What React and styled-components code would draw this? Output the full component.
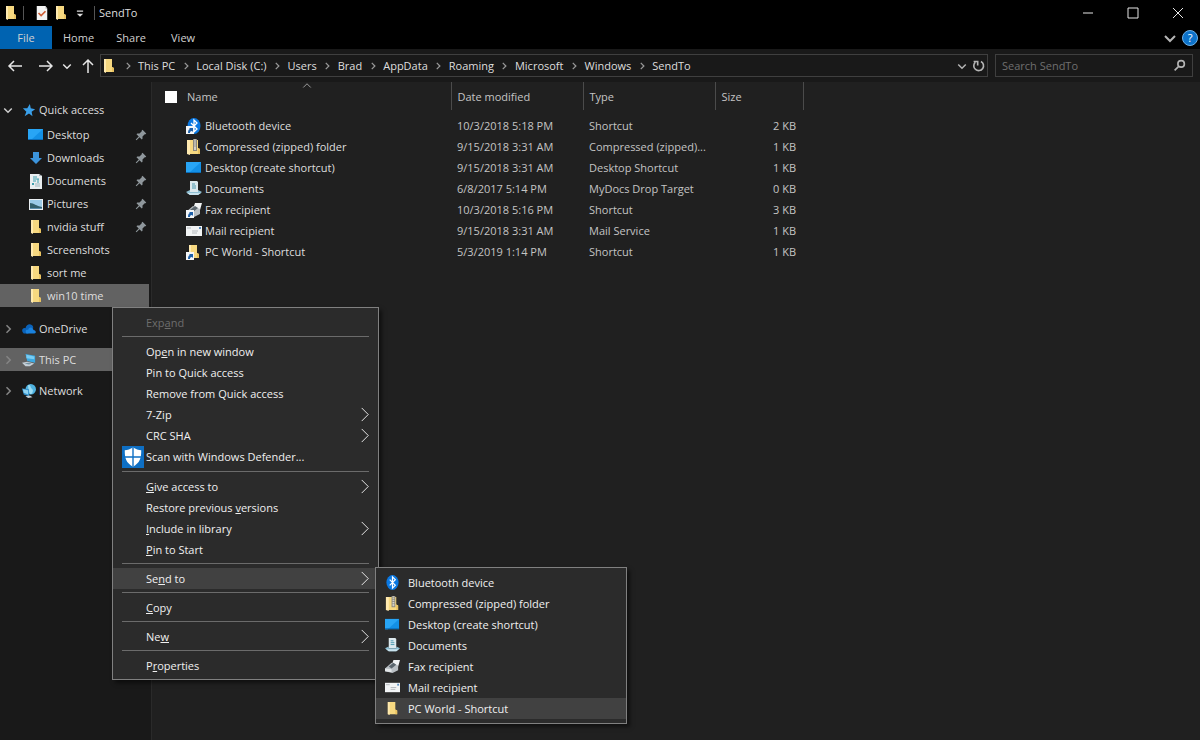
import React from "react";
import styled, { createGlobalStyle, css } from "styled-components";

const quickAccess = [
  { name: "Desktop", icon: "desktop", pinned: true },
  { name: "Downloads", icon: "download", pinned: true },
  { name: "Documents", icon: "document", pinned: true },
  { name: "Pictures", icon: "picture", pinned: true },
  { name: "nvidia stuff", icon: "folder", pinned: true },
  { name: "Screenshots", icon: "folder" },
  { name: "sort me", icon: "folder" },
  { name: "win10 time", icon: "folder", selected: true },
];

const roots = [
  { name: "OneDrive", icon: "cloud" },
  { name: "This PC", icon: "pc", selected: true },
  { name: "Network", icon: "network" },
];

const crumbs = [
  "This PC",
  "Local Disk (C:)",
  "Users",
  "Brad",
  "AppData",
  "Roaming",
  "Microsoft",
  "Windows",
  "SendTo",
];

const files = [
  { name: "Bluetooth device", icon: "bluetooth", link: true, date: "10/3/2018 5:18 PM", type: "Shortcut", size: "2 KB" },
  { name: "Compressed (zipped) folder", icon: "zip", date: "9/15/2018 3:31 AM", type: "Compressed (zipped)...", size: "1 KB" },
  { name: "Desktop (create shortcut)", icon: "desktop", date: "9/15/2018 3:31 AM", type: "Desktop Shortcut", size: "1 KB" },
  { name: "Documents", icon: "docs", date: "6/8/2017 5:14 PM", type: "MyDocs Drop Target", size: "0 KB" },
  { name: "Fax recipient", icon: "fax", link: true, date: "10/3/2018 5:16 PM", type: "Shortcut", size: "3 KB" },
  { name: "Mail recipient", icon: "mail", date: "9/15/2018 3:31 AM", type: "Mail Service", size: "1 KB" },
  { name: "PC World - Shortcut", icon: "folder", link: true, date: "5/3/2019 1:14 PM", type: "Shortcut", size: "1 KB" },
];

// "&" marks the access key of a label
const menuGroups = [
  [{ label: "Exp&and", disabled: true }],
  [
    { label: "Op&en in new window" },
    { label: "Pin to Quick access" },
    { label: "Remove from Quick access" },
    { label: "7-Zip", more: true },
    { label: "CRC SHA", more: true },
    { label: "Scan with Windows Defender...", icon: "shield" },
  ],
  [
    { label: "&Give access to", more: true },
    { label: "Restore previous &versions" },
    { label: "&Include in library", more: true },
    { label: "&Pin to Start" },
  ],
  [{ label: "Se&nd to", more: true, open: true }],
  [{ label: "&Copy" }],
  [{ label: "Ne&w", more: true }],
  [{ label: "P&roperties" }],
];

const drawings = {
  folder: (
    <>
      <path d="M3 1h8v8l2 1v4H3z" fill="#f6d880" />
      <path d="M3 1h2v14l-2-1z" fill="#ffeab0" />
      <path d="M11 9l2 1v4h-2z" fill="#e9c260" />
    </>
  ),
  zip: (
    <>
      <path d="M1 1h11v8l2 1v5H1z" fill="#f6d880" />
      <path d="M1 1h3v15l-3-1z" fill="#ffeab0" />
      <path d="M12 9l2 1v5h-2z" fill="#e9c260" />
      <path d="M7 0h4v12H7z" fill="#8a877c" />
      <path d="M8 1h2M8 3h2M8 5h2M8 7h2" stroke="#e6e4dc" />
      <path d="M8 8h2v3H8z" fill="#d0cec6" />
    </>
  ),
  desktop: (
    <>
      <path d="M0 2h15v11H0z" fill="#1390e6" />
      <path d="M0 2h15L3 13H0z" fill="#28a5f5" />
      <path d="M0 12h15v1H0z" fill="#0a6cb8" />
    </>
  ),
  download: <path d="M5 2h6v6h3l-6 6-6-6h3z" fill="#3c94dc" />,
  document: (
    <>
      <path d="M2 1h9l3 2v13H2z" fill="#e9eef0" />
      <path d="M11 1l3 2h-3z" fill="#a9b4b8" />
      <path d="M5 4h4M5 6h6M5 8h3M10 6v4" stroke="#3f9fae" strokeWidth="1" />
      <path d="M4 10h2v2H4z" fill="#3f9fae" />
      <path d="M7 11h5M7 13h5" stroke="#9fb7bf" />
    </>
  ),
  picture: (
    <>
      <path d="M1 3h14v11H1z" fill="#e9eef2" />
      <path d="M2 4h12v9H2z" fill="#9ccbe8" />
      <path d="M2 7c4 0 6 3 12 4v2H2z" fill="#34606c" />
      <path d="M2 12h12v1H2z" fill="#5c8fae" />
    </>
  ),
  cloud: (
    <>
      <path d="M1 12c-2-3 0-6 3-5 1-5 7-6 9-1l-6 7H2z" fill="#0b62b8" />
      <path d="M5 13c-2-3 0-5 2-4 1-4 6-3 6 0 3 0 4 4 1 4z" fill="#1a82de" />
    </>
  ),
  pc: (
    <>
      <path d="M4 1l11 2v8L6 9z" fill="#3ca9e2" />
      <path d="M5 2l9 2v3L5 6z" fill="#7accf2" />
      <path d="M0 11l6-1 8 2-5 3H4z" fill="#c3ced6" />
      <path d="M3 12l4-1 4 1-3 1z" fill="#74909f" />
    </>
  ),
  network: (
    <>
      <circle cx="10" cy="6" r="6" fill="#4fb2e0" />
      <path d="M7 1c4 0 2 3 4 4s2 4 0 6-4-4-4-10z" fill="#9bdcf4" />
      <path d="M0 5l8 1v8l-6-2z" fill="#3392cd" />
      <path d="M1 6l6 1v5L2 10z" fill="#8fd2f0" />
      <path d="M4 14l5-1 3 2-5 1z" fill="#c3ced6" />
    </>
  ),
  bluetooth: (
    <>
      <ellipse cx="8" cy="8" rx="6.5" ry="8" fill="#0a78e2" />
      <path d="M5 5l6 6-3 3V2l3 3-6 6" fill="none" stroke="#fff" strokeWidth="1.3" />
    </>
  ),
  docs: (
    <>
      <path d="M4 0h7l1 1v10H4z" fill="#dce9ee" />
      <path d="M6 3h3M6 5h4M6 7h4" stroke="#4a98ae" />
      <path d="M0 11l4-2v2h8V9l4 2-4 3H4z" fill="#8fc0d4" />
      <path d="M1 12h14l-3 2H4z" fill="#c9e3ee" />
    </>
  ),
  fax: (
    <>
      <path d="M9 1l7 0-2 7-7-1z" fill="#f1f3f4" />
      <path d="M0 10l7-6 7 3v5l-6 3-8-2z" fill="#b9bfc4" />
      <path d="M0 10l7 1v3l-7-1z" fill="#e2e6e8" />
      <path d="M4 8l5-4 3 2-5 4z" fill="#5b666e" />
    </>
  ),
  mail: (
    <>
      <path d="M0 3h16v10H0z" fill="#f2f4f5" />
      <path d="M13 4h2v2h-2z" fill="#5c8fc0" />
      <path d="M1 5h4M6 8h6M6 10h5" stroke="#b4b9bd" />
    </>
  ),
  star: <path d="M9 1l1 5 5 1-4 3 1 5-4-3-5 3 2-5-4-4h5z" fill="#3aa0ea" />,
  pin: <path d="M10 1l5 5-1 1h-1l-3 3v3l-1 1-3-3-4 4-1-1 4-4-3-3 1-1h3l3-3V2z" fill="#8f979c" />,
  properties: (
    <>
      <path d="M2 0h10l2 3v13H2z" fill="#f4f4f4" />
      <path d="M12 0l2 3h-2z" fill="#b5b5b5" />
      <path d="M4 8l3 3 5-5" fill="none" stroke="#cf5f37" strokeWidth="2" />
    </>
  ),
  shield: (
    <>
      <path d="M0 0h16v16H0z" fill="#0e6fc4" />
      <path d="M8 1c2 1 4 2 6 2 0 6-1 9-6 12C3 12 2 9 2 3c2 0 4-1 6-2z" fill="#fff" />
      <path d="M8 1v14M2 8h12" stroke="#0e6fc4" />
    </>
  ),
};

const strokes = {
  down: "M3 6l5 5 5-5",
  up: "M3 10l5-5 5 5",
  right: "M6 3l5 5-5 5",
  more: "M5 1l7 7-7 7",
  back: "M2 8h13M7 3L2 8l5 5",
  forward: "M2 8h13M10 3l5 5-5 5",
  upArrow: "M9 15V2M4 7l5-5 5 5",
  minimize: "M3 8h10",
  maximize: "M3 3h10v10H3z",
  close: "M3 3l10 10M13 3L3 13",
  refresh: "M11 3a6 6 0 1 1-7 1M2 3h5v5",
  search: "M7 9l-5 5M10 2a4 4 0 1 1 0 8 4 4 0 1 1 0-8z",
};

const Icon = ({ name, size = 16, link }) => (
  <Drawing viewBox="0 0 16 16" $size={size} aria-hidden="true">
    {drawings[name]}
    {link && (
      <>
        <path d="M0 8h8v8H0z" fill="#f4f6f8" />
        <path d="M2 15c0-3 1-4 2-4l-1-1h4v4l-1-1c-2 0-2 1-2 2z" fill="#1d5fa8" />
      </>
    )}
  </Drawing>
);

const Line = ({ name, size = 16, width = 1 }) => (
  <Drawing viewBox="0 0 16 16" $size={size} aria-hidden="true">
    <path d={strokes[name]} fill="none" stroke="currentColor" strokeWidth={width} />
  </Drawing>
);

const Label = ({ text }) => {
  const at = text.indexOf("&");
  if (at < 0) return <span>{text}</span>;
  return (
    <span>
      {text.slice(0, at)}
      <u>{text[at + 1]}</u>
      {text.slice(at + 2)}
    </span>
  );
};

const SendToMenu = () => (
  <SubMenu role="menu" aria-label="Send to">
    {files.map((file, i) => (
      <SubMenuItem key={file.name} role="menuitem" $active={i === files.length - 1}>
        <Icon name={file.icon} size={15} />
        <span>{file.name}</span>
      </SubMenuItem>
    ))}
  </SubMenu>
);

const FolderMenu = () => (
  <ContextMenu role="menu" aria-label="win10 time">
    {menuGroups.map((group, i) => (
      <MenuGroup key={i}>
        {group.map((item) => (
          <MenuEntry key={item.label}>
            <MenuItem role="menuitem" disabled={item.disabled} $active={item.open}>
              <MenuIcon>{item.icon && <Icon name={item.icon} size={22} />}</MenuIcon>
              <Label text={item.label} />
              {item.more && <Line name="more" size={15} />}
            </MenuItem>
            {item.open && <SendToMenu />}
          </MenuEntry>
        ))}
      </MenuGroup>
    ))}
  </ContextMenu>
);

const App = () => {
  return (
    <Window>
      <GlobalStyle />
      <TitleBar>
        <Icon name="folder" />
        <Divider />
        <QuickTools>
          <ToolButton aria-label="Properties">
            <Icon name="properties" size={14} />
          </ToolButton>
          <ToolButton aria-label="New folder">
            <Icon name="folder" />
          </ToolButton>
          <ToolButton aria-label="Customize Quick Access Toolbar">
            <Drawing viewBox="0 0 16 16" $size={10}>
              <path d="M3 5h10" stroke="#ddd" strokeWidth="2" />
              <path d="M3 9h10l-5 5z" fill="#ddd" />
            </Drawing>
          </ToolButton>
        </QuickTools>
        <Divider />
        <Title>SendTo</Title>
        <WindowButton aria-label="Minimize">
          <Line name="minimize" />
        </WindowButton>
        <WindowButton aria-label="Maximize">
          <Line name="maximize" />
        </WindowButton>
        <WindowButton aria-label="Close">
          <Line name="close" />
        </WindowButton>
      </TitleBar>

      <Ribbon>
        <Tab $file>File</Tab>
        <Tab>Home</Tab>
        <Tab>Share</Tab>
        <Tab>View</Tab>
        <RibbonEnd>
          <ToolButton aria-label="Expand the Ribbon">
            <Line name="down" width={2} />
          </ToolButton>
          <Help aria-label="Help">?</Help>
        </RibbonEnd>
      </Ribbon>

      <NavBar>
        <NavButtons>
          <NavButton aria-label="Back" $width={30}>
            <Line name="back" width={1.5} />
          </NavButton>
          <NavButton aria-label="Forward" $width={30}>
            <Line name="forward" width={1.5} />
          </NavButton>
          <NavButton aria-label="Recent locations" $width={14}>
            <Line name="down" size={12} width={2} />
          </NavButton>
          <NavButton aria-label="Up" $width={26}>
            <Line name="upArrow" width={1.5} />
          </NavButton>
        </NavButtons>
        <Address aria-label="Address">
          <Icon name="folder" />
          {crumbs.map((crumb) => (
            <React.Fragment key={crumb}>
              <CrumbArrow>
                <Line name="right" size={10} width={2} />
              </CrumbArrow>
              <Crumb href="#">{crumb}</Crumb>
            </React.Fragment>
          ))}
          <AddressEnd>
            <ToolButton aria-label="Previous locations">
              <Line name="down" size={12} width={2} />
            </ToolButton>
            <ToolButton aria-label="Refresh">
              <Line name="refresh" size={13} width={2} />
            </ToolButton>
          </AddressEnd>
        </Address>
        <Search>
          <input type="search" aria-label="Search SendTo" placeholder="Search SendTo" />
          <Line name="search" size={13} width={2} />
        </Search>
      </NavBar>

      <Body>
        <Sidebar aria-label="Folders">
          <TreeRow href="#">
            <Twisty $open>
              <Line name="down" size={12} width={2} />
            </Twisty>
            <Icon name="star" size={14} />
            <TreeLabel>Quick access</TreeLabel>
          </TreeRow>
          <TreeChildren>
            {quickAccess.map((item) => (
              <TreeRow key={item.name} href="#" $child $selected={item.selected}>
                <Icon name={item.icon} />
                <TreeLabel>{item.name}</TreeLabel>
                {item.pinned && <Icon name="pin" size={12} />}
              </TreeRow>
            ))}
          </TreeChildren>
          <Roots>
            {roots.map((item) => (
              <TreeRow key={item.name} href="#" $selected={item.selected}>
                <Twisty>
                  <Line name="right" size={12} width={2} />
                </Twisty>
                <Icon name={item.icon} size={14} />
                <TreeLabel>{item.name}</TreeLabel>
              </TreeRow>
            ))}
          </Roots>
        </Sidebar>

        <Content>
          <Files>
            <colgroup>
              <col width="299" />
              <col width="132" />
              <col width="132" />
              <col width="88" />
            </colgroup>
            <thead>
              <tr>
                <th>
                  <NameHead>
                    <SelectAll type="checkbox" aria-label="Select all" />
                    Name
                    <SortMark>
                      <Line name="up" size={12} />
                    </SortMark>
                  </NameHead>
                </th>
                <th>Date modified</th>
                <th>Type</th>
                <th>Size</th>
              </tr>
            </thead>
            <tbody>
              {files.map((file) => (
                <tr key={file.name}>
                  <td>
                    <FileName>
                      <Icon name={file.icon} link={file.link} />
                      {file.name}
                    </FileName>
                  </td>
                  <td>{file.date}</td>
                  <td>{file.type}</td>
                  <td>{file.size}</td>
                </tr>
              ))}
            </tbody>
          </Files>
        </Content>
      </Body>

      <FolderMenu />
    </Window>
  );
};

const GlobalStyle = createGlobalStyle`
  * {
    box-sizing: border-box;
  }

  body {
    margin: 0;
    background: #202020;
  }

  body, button, input {
    font-family: "Open Sans", "Noto Sans", sans-serif;
    font-size: 11px;
    line-height: 16px;
    color: #dedede;
  }

  button {
    padding: 0;
    border: 0;
    background: none;
  }

  a {
    color: inherit;
    text-decoration: none;
  }
`;

const Drawing = styled.svg`
  display: block;
  flex: none;
  width: ${(p) => p.$size}px;
  height: ${(p) => p.$size}px;
`;

const Window = styled.div`
  position: relative;
  display: flex;
  flex-direction: column;
  min-height: 100vh;
  background: #191919;
`;

const TitleBar = styled.header`
  display: flex;
  align-items: center;
  height: 26px;
  padding-left: 3px;
  background: #000;
`;

const Divider = styled.span`
  width: 1px;
  height: 14px;
  margin: 0 4px;
  background: #555;
`;

const QuickTools = styled.div`
  display: flex;
  gap: 3px;
  padding: 0 2px 0 6px;
`;

const ToolButton = styled.button`
  display: flex;
  align-items: center;
  justify-content: center;
  min-width: 16px;
  color: #b5b5b5;
`;

const Title = styled.span`
  flex: 1;
`;

const WindowButton = styled(ToolButton)`
  width: 45px;
  height: 24px;
  color: #e6e6e6;
`;

const Ribbon = styled.div`
  display: flex;
  height: 23px;
  background: #000;
`;

const Tab = styled.button`
  min-width: 52px;
  padding: 0 11px;
  color: #d0d0d0;
  background: ${(p) => (p.$file ? "#0063b1" : "none")};
`;

const RibbonEnd = styled.div`
  display: flex;
  align-items: center;
  gap: 4px;
  margin-left: auto;
  padding-right: 2px;
`;

const Help = styled.button`
  width: 16px;
  height: 16px;
  border: 1px solid #6cb2ea;
  border-radius: 50%;
  background: #0d72c9;
  color: #fff;
  line-height: 14px;
`;

const NavBar = styled.nav`
  display: flex;
  align-items: center;
  height: 33px;
  padding-right: 7px;
`;

const NavButtons = styled.div`
  display: flex;
  align-items: center;
  width: 100px;
`;

const NavButton = styled.button`
  display: flex;
  align-items: center;
  justify-content: center;
  width: ${(p) => p.$width}px;
  color: #e6e6e6;
`;

const Address = styled.div`
  display: flex;
  flex: 1;
  align-items: center;
  height: 23px;
  padding-right: 1px;
  border: 1px solid #3f3f3f;
`;

const CrumbArrow = styled.span`
  display: flex;
  justify-content: center;
  width: 21px;
  color: #999;
`;

const Crumb = styled.a`
  white-space: nowrap;
`;

const AddressEnd = styled.div`
  display: flex;
  margin-left: auto;
`;

const Search = styled.label`
  display: flex;
  align-items: center;
  width: 198px;
  height: 23px;
  margin-left: 7px;
  padding: 0 6px;
  border: 1px solid #3f3f3f;
  color: #b5b5b5;

  input {
    flex: 1;
    min-width: 0;
    padding: 0;
    border: 0;
    outline: 0;
    background: none;
  }

  input::placeholder {
    color: #6f6f6f;
  }
`;

const Body = styled.div`
  display: flex;
  flex: 1;
`;

const Sidebar = styled.nav`
  flex: none;
  width: 152px;
  padding: 16px 2px 0 0;
  border-right: 1px solid #2a2a2a;
`;

const TreeRow = styled.a`
  display: flex;
  align-items: center;
  gap: 3px;
  height: 23px;
  padding: 0 2px;
  background: ${(p) => (p.$selected ? "#626262" : "none")};

  ${(p) =>
    p.$child &&
    css`
      padding-left: 28px;
    `}
`;

const TreeLabel = styled.span`
  flex: 1;
  white-space: nowrap;
`;

const TreeChildren = styled.div`
  padding: 2px 0 10px;
`;

const Roots = styled.div`
  display: grid;
  gap: 8px;
`;

const Twisty = styled.span`
  display: flex;
  width: 17px;
  color: ${(p) => (p.$open ? "#d0d0d0" : "#858585")};
`;

const Content = styled.main`
  flex: 1;
  background: #202020;
`;

const Files = styled.table`
  width: 651px;
  table-layout: fixed;
  border-collapse: collapse;
  color: #c4c4c4;

  th,
  td {
    padding: 0 7px 0 6px;
    font-weight: 400;
    text-align: left;
    white-space: nowrap;
  }

  th {
    height: 28px;
    padding-top: 2px;
    border-right: 1px solid #4b4b4b;
  }

  tbody::before {
    content: "";
    display: block;
    height: 5px;
  }

  td {
    height: 21px;
  }

  td:last-child {
    text-align: right;
  }

  td:first-child {
    padding-left: 34px;
    color: #dedede;
  }
`;

const NameHead = styled.div`
  position: relative;
  display: flex;
  align-items: center;
  gap: 10px;
  padding-left: 7px;
`;

const SelectAll = styled.input`
  appearance: none;
  width: 12px;
  height: 12px;
  margin: 0;
  background: #fff;
`;

const SortMark = styled.span`
  position: absolute;
  top: -9px;
  left: 50%;
`;

const FileName = styled.div`
  display: flex;
  align-items: center;
  gap: 3px;
`;

const menuPanel = css`
  position: absolute;
  border: 1px solid #808080;
  background: #2b2b2b;
  box-shadow: 3px 3px 4px rgba(0, 0, 0, 0.5);
`;

const ContextMenu = styled.div`
  ${menuPanel}
  top: 307px;
  left: 112px;
  width: 267px;
  padding: 4px 0 3px;
`;

const MenuGroup = styled.div`
  & + &::before {
    content: "";
    display: block;
    height: 1px;
    margin: 3px 9px 4px;
    background: #6b6b6b;
  }
`;

const MenuEntry = styled.div`
  position: relative;
`;

const MenuItem = styled.button`
  display: flex;
  align-items: center;
  gap: 2px;
  width: 100%;
  min-height: 21px;
  padding: 0 6px 0 9px;
  color: #f0f0f0;
  background: ${(p) => (p.$active ? "#414141" : "none")};

  &:disabled {
    color: #6d6d6d;
  }

  span + svg {
    margin-left: auto;
  }
`;

const MenuIcon = styled.span`
  width: 22px;
`;

const SubMenu = styled.div`
  ${menuPanel}
  top: -1px;
  left: 262px;
  width: 252px;
  padding: 4px 0;
`;

const SubMenuItem = styled.button`
  display: flex;
  align-items: center;
  gap: 8px;
  width: 100%;
  height: 21px;
  padding-left: 9px;
  color: #f0f0f0;
  background: ${(p) => (p.$active ? "#414141" : "none")};
`;

export default App;
